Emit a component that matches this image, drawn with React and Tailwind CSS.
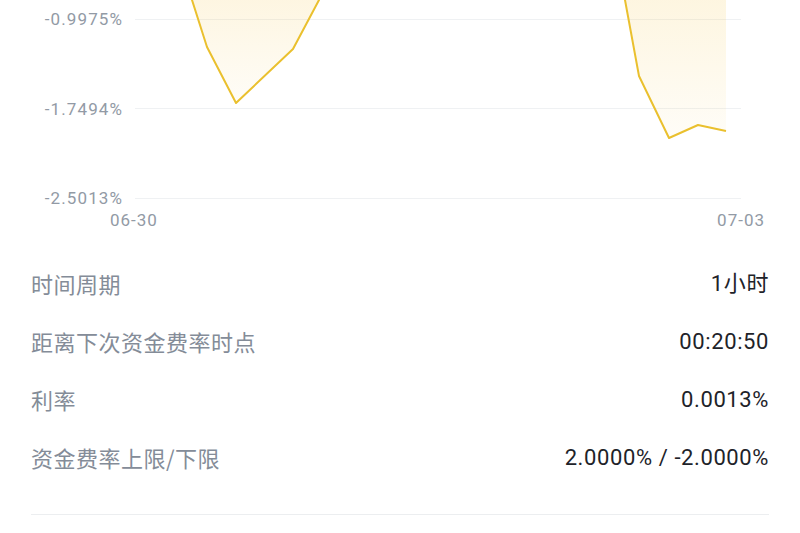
const rows = [
  { label: "时间周期", value: "1小时" },
  { label: "距离下次资金费率时点", value: "00:20:50" },
  { label: "利率", value: "0.0013%" },
  { label: "资金费率上限/下限", value: "2.0000% / -2.0000%" },
];

const yLabels = ["-0.9975%", "-1.7494%", "-2.5013%"];

function FundingChart() {
  const left = "51,-20 57,0 72,47 101,103 158,49 184,0 195,-20";
  const right = "486,-20 490,0 504,76 534,138 563,125 591,131";

  return (
    <div className="flex h-[205px]">
      {/* y axis */}
      <div className="w-[135px] shrink-0 flex flex-col items-end gap-[69.5px] pt-[9px] pr-[12px] text-[17px] tracking-[1.1px] text-[#929aa5] font-['Roboto',sans-serif]">
        {yLabels.map((l) => (
          <div key={l} className="h-[20px] leading-[20px]">
            {l}
          </div>
        ))}
      </div>
      <svg width="665" height="205" viewBox="0 0 665 205" className="block">
        <defs>
          <linearGradient id="fill" x1="0" y1="0" x2="0" y2="1">
            <stop offset="0" stopColor="#f5c542" stopOpacity="0.18" />
            <stop offset="1" stopColor="#f5c542" stopOpacity="0.04" />
          </linearGradient>
        </defs>
        {[19, 108, 198].map((y) => (
          <line key={y} x1="0" x2="606" y1={y + 0.5} y2={y + 0.5} stroke="#eff1f3" strokeWidth="1" />
        ))}
        <polygon points={left} fill="url(#fill)" />
        <polygon points={right + " 591,-20"} fill="url(#fill)" />
        <polyline points={left} fill="none" stroke="#eac02e" strokeWidth="2" strokeLinejoin="round" />
        <polyline points={right} fill="none" stroke="#eac02e" strokeWidth="2" strokeLinejoin="round" />
      </svg>
    </div>
  );
}

export default function App() {
  return (
    <div className="w-[800px] h-[533px] overflow-hidden bg-white">
      <FundingChart />

      {/* x axis */}
      <div className="h-[32px] flex items-center justify-between pl-[110px] pr-[35px] text-[17px] tracking-[1px] text-[#929aa5] font-['Roboto',sans-serif]">
        <span>06-30</span>
        <span>07-03</span>
      </div>

      <div className="mt-[17px] px-[31px]">
        {rows.map((r) => (
          <div key={r.label} className="h-[58px] flex items-center justify-between">
            <span className="text-[22px] text-[#848c98] tracking-[0.5px] font-['Noto_Sans_CJK_SC',sans-serif]">
              {r.label}
            </span>
            <span className="text-[22px] text-[#1e2329] tracking-[0.6px] font-['Roboto','Noto_Sans_CJK_SC',sans-serif]">
              {r.value}
            </span>
          </div>
        ))}
        <div className="mt-[28px] border-t border-[#eceef0]" />
      </div>
    </div>
  );
}
